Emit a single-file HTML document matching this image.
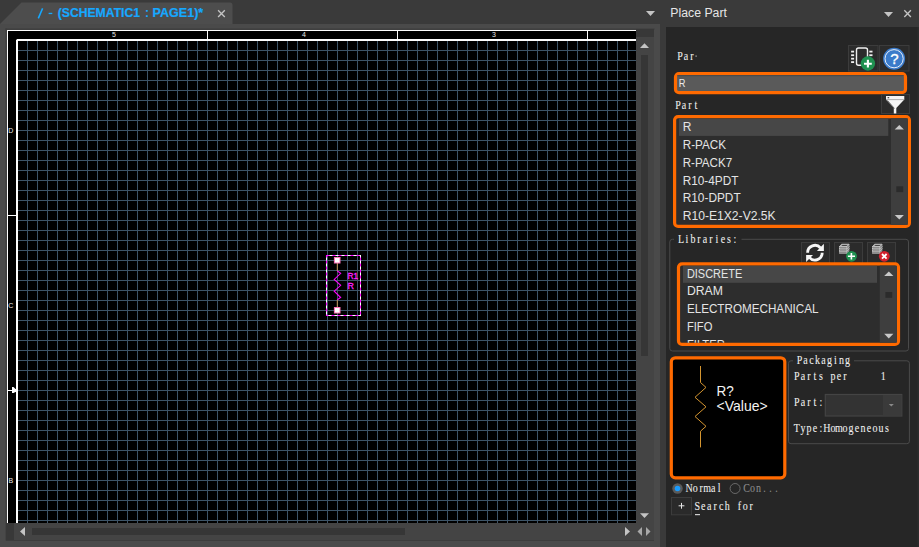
<!DOCTYPE html>
<html><head><meta charset="utf-8">
<style>
html,body{margin:0;padding:0;width:919px;height:547px;overflow:hidden;background:#3a3a3a;}
svg{display:block;position:absolute;left:0;top:0;}
</style></head>
<body>
<svg width="919" height="547" viewBox="0 0 919 547">
<defs>
  <pattern id="grid" x="17" y="40" width="10" height="10" patternUnits="userSpaceOnUse">
    <rect x="0" y="0" width="10" height="1" fill="#3d5467"/>
    <rect x="0" y="0" width="1" height="10" fill="#3d5467"/>
  </pattern>
  <clipPath id="cv"><rect x="7" y="30" width="629" height="493"/></clipPath>
  <clipPath id="libclip"><rect x="680.1" y="265.4" width="216.8" height="77.4"/></clipPath>
</defs>
<rect x="0" y="0" width="666" height="547" fill="#3a3a3a"/>
<path d="M0,24 L21.5,2.5 L230,2.5 Q232.5,2.5 232.5,5 L232.5,24 Z" fill="#4d4d4d"/>
<rect x="0" y="24" width="660" height="523" fill="#4a4a4a"/>
<path d="M38.3,18.4 L42.6,8.4" stroke="#16a8ff" stroke-width="1.5"/>
<rect x="48.6" y="12.8" width="3.7" height="1.3" fill="#16a8ff"/>
<text font-family="Liberation Sans" font-size="12" fill="#16a8ff" x="57.7" y="16.8" textLength="82.4" lengthAdjust="spacingAndGlyphs" font-weight="bold" stroke="#16a8ff" stroke-width="0.2">(SCHEMATIC1</text>
<text font-family="Liberation Sans" font-size="12" fill="#16a8ff" x="145.0" y="16.8" font-weight="bold" >:</text>
<text font-family="Liberation Sans" font-size="12" fill="#16a8ff" x="152.6" y="16.8" textLength="50.6" lengthAdjust="spacingAndGlyphs" font-weight="bold" stroke="#16a8ff" stroke-width="0.2">PAGE1)*</text>
<path d="M218.1,10.3 L224.8,17 M224.8,10.3 L218.1,17" stroke="#c4c4c4" stroke-width="1.35"/>
<path d="M646,11 L655,11 L650.5,16 Z" fill="#c4c4c4"/>
<g clip-path="url(#cv)">
<rect x="7" y="30" width="629" height="493" fill="#000"/>
<rect x="17" y="40" width="620" height="484" fill="url(#grid)"/>
<rect x="7" y="30" width="640" height="1" fill="#fff"/>
<rect x="7" y="30" width="1" height="500" fill="#fff"/>
<rect x="16.5" y="39" width="630" height="2" fill="#fff"/>
<rect x="16" y="39.5" width="2" height="490" fill="#fff"/>
<path d="M16,39 L17,39 L16,40 Z" fill="#000"/>
<rect x="207" y="30" width="1" height="10" fill="#fff"/>
<rect x="397" y="30" width="1" height="10" fill="#fff"/>
<rect x="587" y="30" width="1" height="10" fill="#fff"/>
<rect x="7" y="215" width="10" height="1" fill="#fff"/>
<rect x="7" y="390" width="10" height="1" fill="#fff"/>
<path d="M12,387 L13.5,387 L15.5,389 L17,389 L17,392 L15.5,392 L13.5,393 L12,393 Z" fill="#fff"/>
<g font-family="Liberation Sans" font-size="7" fill="#e8e8e8">
<text x="112" y="37">5</text><text x="302" y="37">4</text><text x="492" y="37">3</text>
<text x="8.2" y="133">D</text><text x="8.2" y="308">C</text><text x="8.6" y="483">B</text>
</g>
<rect x="326.5" y="255.5" width="34" height="60" fill="none" stroke="#fff" stroke-width="1"/>
<rect x="326.5" y="255.5" width="34" height="60" fill="none" stroke="#ff00ff" stroke-width="1.1" stroke-dasharray="3 3"/>
<path d="M337.3,263 L337.3,271 M337.3,299.8 L337.3,307" stroke="#c09050" stroke-width="1"/>
<path d="M337.3,271 L340.7,273.4 L334.2,279.4 L340.7,285.3 L334.2,291.2 L340.7,297.5 L337.3,299.8" fill="none" stroke="#ff00ff" stroke-width="1.05"/>
<rect x="334.4" y="257.5" width="5.6" height="5.5" fill="#fff" stroke="#ff70b8" stroke-width="1"/>
<rect x="334.4" y="307.5" width="5.6" height="5.5" fill="#fff" stroke="#ff70b8" stroke-width="1"/>
<text font-family="Liberation Sans" font-size="9.6" fill="#ff20ff" x="347.4" y="278.9" textLength="10.6" lengthAdjust="spacingAndGlyphs" stroke="#ff20ff" stroke-width="0.35">R1</text>
<text font-family="Liberation Sans" font-size="9.6" fill="#ff20ff" x="347.4" y="288.6" textLength="6.4" lengthAdjust="spacingAndGlyphs" stroke="#ff20ff" stroke-width="0.35">R</text>
</g>
<rect x="5.5" y="28.5" width="649" height="1.2" fill="#3d3d3d"/>
<rect x="5.5" y="28.5" width="1.2" height="512" fill="#3d3d3d"/>
<rect x="636" y="30" width="18" height="493" fill="#444444"/>
<rect x="636" y="29" width="18" height="8" fill="#383838"/>
<path d="M640,48 L649,48 L644.5,43.2 Z" fill="#c4c4c4"/>
<rect x="641" y="55" width="7" height="301" fill="#363636"/>
<path d="M640,513.2 L649,513.2 L644.5,518 Z" fill="#c4c4c4"/>
<rect x="6" y="523" width="648" height="17" fill="#444444"/>
<rect x="6" y="523" width="8" height="17" fill="#383838"/>
<rect x="6" y="540" width="648" height="1" fill="#3c3c3c"/>
<path d="M25,527 L25,536 L20,531.5 Z" fill="#c4c4c4"/>
<rect x="32" y="528" width="373" height="7" fill="#363636"/>
<path d="M625,527 L625,536 L630,531.5 Z" fill="#c4c4c4"/>
<path d="M642,527 L642,536 L637.5,531.5 Z" fill="#a8a8a8"/>
<path d="M646,527 L646,536 L650.5,531.5 Z" fill="#a8a8a8"/>
<rect x="666" y="0" width="253" height="27" fill="#3a3a3a"/>
<text font-family="Liberation Sans" font-size="12.5" fill="#e6e6e6" x="670.3" y="16.9" textLength="56.6" lengthAdjust="spacingAndGlyphs" >Place Part</text>
<path d="M884,12 L893,12 L888.5,17 Z" fill="#c4c4c4"/>
<path d="M904.3,10.3 L910.9,16.9 M910.9,10.3 L904.3,16.9" stroke="#c4c4c4" stroke-width="1.35"/>
<rect x="666" y="27" width="253" height="520" fill="#262626"/>
<rect x="917.3" y="27" width="1.7" height="520" fill="#2c2c2c"/>
<text transform="scale(0.8,1)" font-family="Liberation Serif" font-size="12.5" fill="#f0f0f0" stroke="#f0f0f0" stroke-width="0.08" text-anchor="middle" x="850.00,857.50,865.00" y="60" >Par</text>
<rect x="695.5" y="55.5" width="1.2" height="1.2" fill="#bbb"/>
<rect x="848.5" y="45.5" width="29.5" height="25.5" fill="#2b2b2b" stroke="#3c3c3c" stroke-width="1"/>
<rect x="879.5" y="45.5" width="29.5" height="25.5" fill="#2b2b2b" stroke="#3c3c3c" stroke-width="1"/>
<rect x="856.5" y="48" width="11" height="17.3" rx="2" fill="none" stroke="#f0f0f0" stroke-width="1.4"/>
<g fill="#f0f0f0"><rect x="851.1" y="50.7" width="3" height="1.8"/><rect x="851.1" y="54.3" width="3" height="1.8"/><rect x="851.1" y="57.8" width="3" height="1.8"/><rect x="851.1" y="61.2" width="3" height="1.8"/><rect x="869.3" y="50.7" width="3.2" height="1.8"/><rect x="869.3" y="54.3" width="3.2" height="1.8"/></g>
<circle cx="867.9" cy="63.5" r="7.2" fill="#1f9150"/>
<path d="M864,63.7 L871.8,63.7 M867.9,59.8 L867.9,67.6" stroke="#fff" stroke-width="2.1"/>
<circle cx="894.1" cy="58.7" r="11" fill="#3b7bca"/>
<circle cx="894.1" cy="58.7" r="9.1" fill="none" stroke="#e8eef8" stroke-width="1"/>
<text x="894.3" y="64.3" text-anchor="middle" font-family="Liberation Sans" font-size="15" fill="#fff" stroke="#fff" stroke-width="0.35">?</text>
<rect x="675.5" y="73.5" width="230" height="19.2" rx="3.5" fill="#5a5a5a" stroke="#ff6a00" stroke-width="3.2"/>
<rect x="677.2" y="75.2" width="226.6" height="1" fill="#474747"/>
<text font-family="Liberation Sans" font-size="11.5" fill="#ececec" x="678.8" y="87" textLength="6.7" lengthAdjust="spacingAndGlyphs" >R</text>
<text transform="scale(0.8,1)" font-family="Liberation Serif" font-size="12.5" fill="#f0f0f0" stroke="#f0f0f0" stroke-width="0.08" text-anchor="middle" x="847.50,855.00,862.50,870.00" y="109" >Part</text>
<rect x="881.5" y="94.5" width="28" height="19" fill="#2b2b2b" stroke="#3c3c3c" stroke-width="1"/>
<path d="M886,96 L904.3,96 L904.3,99.6 L896.3,108 L896.3,113.5 L893.8,113.5 L893.8,108 L886,99.6 Z" fill="#f4f4f4"/>
<rect x="886" y="99.3" width="18.3" height="0.8" fill="#9a9a9a"/>
<path d="M887.5,100.5 L894.5,108.5" stroke="#3a3a3a" stroke-width="0.7"/>
<rect x="887.6" y="97" width="1.6" height="1.3" fill="#555"/>
<rect x="674.6" y="116.6" width="234.8" height="109.8" rx="3.5" fill="#2d2d2d" stroke="#ff6a00" stroke-width="3.2"/>
<rect x="679" y="118.7" width="209.3" height="17.2" fill="#474747"/>
<rect x="891" y="118.2" width="16.8" height="106.6" fill="#3e3e3e"/>
<path d="M894.7,129.5 L903.9,129.5 L899.3,124.9 Z" fill="#c8c8c8"/>
<rect x="896.3" y="186.3" width="6.9" height="5.8" fill="#2b2b2b"/>
<path d="M894.7,214.9 L903.9,214.9 L899.3,219.5 Z" fill="#c8c8c8"/>
<text font-family="Liberation Sans" font-size="12" fill="#e4e4e4" x="682.7" y="130.8" >R</text>
<text font-family="Liberation Sans" font-size="12" fill="#e4e4e4" x="682.7" y="148.72" textLength="43.3" lengthAdjust="spacingAndGlyphs" >R-PACK</text>
<text font-family="Liberation Sans" font-size="12" fill="#e4e4e4" x="682.7" y="166.64" textLength="49.5" lengthAdjust="spacingAndGlyphs" >R-PACK7</text>
<text font-family="Liberation Sans" font-size="12" fill="#e4e4e4" x="682.7" y="184.56" textLength="55.7" lengthAdjust="spacingAndGlyphs" >R10-4PDT</text>
<text font-family="Liberation Sans" font-size="12" fill="#e4e4e4" x="682.7" y="202.48" textLength="58" lengthAdjust="spacingAndGlyphs" >R10-DPDT</text>
<text font-family="Liberation Sans" font-size="12" fill="#e4e4e4" x="682.7" y="220.4" textLength="93" lengthAdjust="spacingAndGlyphs" >R10-E1X2-V2.5K</text>
<path d="M674,239.3 L672.5,239.3 Q669.8,239.3 669.8,242 L669.8,348.5 Q669.8,351 672.5,351 L906,351 Q908.5,351 908.5,348.5 L908.5,242 Q908.5,239.3 906,239.3 L741.5,239.3" fill="none" stroke="#4a4a4a" stroke-width="1"/>
<text transform="scale(0.8,1)" font-family="Liberation Serif" font-size="12.5" fill="#f0f0f0" stroke="#f0f0f0" stroke-width="0.08" text-anchor="middle" x="851.25,858.75,866.25,873.75,881.25,888.75,896.25,903.75,911.25,918.75" y="242.6" >Libraries:</text>
<rect x="801.5" y="242.5" width="28" height="22" fill="#2b2b2b" stroke="#3c3c3c" stroke-width="1"/>
<rect x="834.5" y="242.5" width="28" height="22" fill="#2b2b2b" stroke="#3c3c3c" stroke-width="1"/>
<rect x="867.5" y="242.5" width="28" height="22" fill="#2b2b2b" stroke="#3c3c3c" stroke-width="1"/>
<g fill="none" stroke="#f6f6f6" stroke-width="2.8"><path d="M807.6,252.7 A7.3,7.3 0 0 1 820.5,248"/><path d="M822.2,252.7 A7.3,7.3 0 0 1 809.3,257.4"/></g>
<path d="M823.9,243.7 L823.9,251 L816.9,251 Z" fill="#f6f6f6"/>
<path d="M806.1,254.9 L806.1,262 L813,254.9 Z" fill="#f6f6f6"/>
<g transform="translate(0,0)"><path d="M841.6,248.6 L849,248.6 L847,250.9 L839.6,250.9 Z" fill="#a8a8a8" stroke="#dcdcdc" stroke-width="0.7"/><rect x="839.6" y="250.9" width="7.4" height="2.4" fill="#8c8c8c" stroke="#cfcfcf" stroke-width="0.5"/><path d="M847,250.9 L849,248.6 L849,251.0 L847,253.3 Z" fill="#7a7a7a" stroke="#cfcfcf" stroke-width="0.5"/><path d="M841.6,246.4 L849,246.4 L847,248.7 L839.6,248.7 Z" fill="#a8a8a8" stroke="#dcdcdc" stroke-width="0.7"/><rect x="839.6" y="248.7" width="7.4" height="2.4" fill="#8c8c8c" stroke="#cfcfcf" stroke-width="0.5"/><path d="M847,248.7 L849,246.4 L849,248.8 L847,251.1 Z" fill="#7a7a7a" stroke="#cfcfcf" stroke-width="0.5"/><path d="M841.6,244.2 L849,244.2 L847,246.5 L839.6,246.5 Z" fill="#a8a8a8" stroke="#dcdcdc" stroke-width="0.7"/><rect x="839.6" y="246.5" width="7.4" height="2.4" fill="#8c8c8c" stroke="#cfcfcf" stroke-width="0.5"/><path d="M847,246.5 L849,244.2 L849,246.6 L847,248.9 Z" fill="#7a7a7a" stroke="#cfcfcf" stroke-width="0.5"/><path d="M842.5,244.9 L847.5,244.9 L846.5,245.9 L841.5,245.9 Z" fill="#444"/></g>
<g transform="translate(33,0)"><path d="M841.6,248.6 L849,248.6 L847,250.9 L839.6,250.9 Z" fill="#a8a8a8" stroke="#dcdcdc" stroke-width="0.7"/><rect x="839.6" y="250.9" width="7.4" height="2.4" fill="#8c8c8c" stroke="#cfcfcf" stroke-width="0.5"/><path d="M847,250.9 L849,248.6 L849,251.0 L847,253.3 Z" fill="#7a7a7a" stroke="#cfcfcf" stroke-width="0.5"/><path d="M841.6,246.4 L849,246.4 L847,248.7 L839.6,248.7 Z" fill="#a8a8a8" stroke="#dcdcdc" stroke-width="0.7"/><rect x="839.6" y="248.7" width="7.4" height="2.4" fill="#8c8c8c" stroke="#cfcfcf" stroke-width="0.5"/><path d="M847,248.7 L849,246.4 L849,248.8 L847,251.1 Z" fill="#7a7a7a" stroke="#cfcfcf" stroke-width="0.5"/><path d="M841.6,244.2 L849,244.2 L847,246.5 L839.6,246.5 Z" fill="#a8a8a8" stroke="#dcdcdc" stroke-width="0.7"/><rect x="839.6" y="246.5" width="7.4" height="2.4" fill="#8c8c8c" stroke="#cfcfcf" stroke-width="0.5"/><path d="M847,246.5 L849,244.2 L849,246.6 L847,248.9 Z" fill="#7a7a7a" stroke="#cfcfcf" stroke-width="0.5"/><path d="M842.5,244.9 L847.5,244.9 L846.5,245.9 L841.5,245.9 Z" fill="#444"/></g>
<circle cx="851.5" cy="256.3" r="5.4" fill="#1f9150"/>
<path d="M847.9,256.3 L855,256.3 M851.4,253 L851.4,259.5" stroke="#fff" stroke-width="1.6"/>
<circle cx="884.3" cy="256.3" r="5.4" fill="#d3202c"/>
<path d="M882,254 L886.6,258.6 M886.6,254 L882,258.6" stroke="#fff" stroke-width="1.8"/>
<rect x="678.5" y="263.8" width="220" height="80.6" rx="3.5" fill="#2d2d2d" stroke="#ff6a00" stroke-width="3.2"/>
<g clip-path="url(#libclip)">
<rect x="683" y="265.8" width="194" height="17" fill="#474747"/>
<rect x="879.8" y="265.4" width="17.2" height="77.4" fill="#3e3e3e"/>
<path d="M884.2,276 L893.4,276 L888.8,271.4 Z" fill="#c8c8c8"/>
<rect x="885.4" y="292" width="6.8" height="5.8" fill="#2b2b2b"/>
<path d="M884.2,333.8 L893.4,333.8 L888.8,338.4 Z" fill="#c8c8c8"/>
<text font-family="Liberation Sans" font-size="12" fill="#e4e4e4" x="686.9" y="277.5" textLength="55.4" lengthAdjust="spacingAndGlyphs" >DISCRETE</text>
<text font-family="Liberation Sans" font-size="12" fill="#e4e4e4" x="686.9" y="295.45" textLength="36" lengthAdjust="spacingAndGlyphs" >DRAM</text>
<text font-family="Liberation Sans" font-size="12" fill="#e4e4e4" x="686.9" y="313.4" textLength="131.6" lengthAdjust="spacingAndGlyphs" >ELECTROMECHANICAL</text>
<text font-family="Liberation Sans" font-size="12" fill="#e4e4e4" x="686.9" y="331.35" textLength="25.5" lengthAdjust="spacingAndGlyphs" >FIFO</text>
<text font-family="Liberation Sans" font-size="12" fill="#e4e4e4" x="686.9" y="349.3" textLength="38" lengthAdjust="spacingAndGlyphs" >FILTER</text>
</g>
<rect x="671.3" y="357.8" width="113.5" height="120.1" rx="4" fill="#000" stroke="#ff6a00" stroke-width="3.2"/>
<path d="M700.5,366 L700.5,382.5 L706,387.4 L695,397.3 L706,406.8 L695,416.5 L706,426.3 L700.5,431.2 L700.5,447.4" fill="none" stroke="#d49530" stroke-width="1"/>
<text font-family="Liberation Sans" font-size="14.8" fill="#f4f4f4" x="716.6" y="396" textLength="17.3" lengthAdjust="spacingAndGlyphs" >R?</text>
<text font-family="Liberation Sans" font-size="14.8" fill="#f4f4f4" x="716.6" y="411.4" textLength="51.1" lengthAdjust="spacingAndGlyphs" >&lt;Value&gt;</text>
<path d="M793,360.8 L791,360.8 Q788.5,360.8 788.5,363.3 L788.5,441.2 Q788.5,443.7 791,443.7 L906.9,443.7 Q909.4,443.7 909.4,441.2 L909.4,363.3 Q909.4,360.8 906.9,360.8 L854,360.8" fill="none" stroke="#4a4a4a" stroke-width="1"/>
<text transform="scale(0.8,1)" font-family="Liberation Serif" font-size="12.5" fill="#f0f0f0" stroke="#f0f0f0" stroke-width="0.08" text-anchor="middle" x="999.38,1006.88,1014.38,1021.88,1029.38,1036.88,1044.38,1051.88,1059.38" y="364.3" >Packaging</text>
<text transform="scale(0.8,1)" font-family="Liberation Serif" font-size="12.5" fill="#f0f0f0" stroke="#f0f0f0" stroke-width="0.08" text-anchor="middle" x="996.12,1003.62,1011.12,1018.62,1026.12,1033.62,1041.12,1048.62,1056.12" y="380.3" >Parts per</text>
<text transform="scale(0.8,1)" font-family="Liberation Serif" font-size="12.5" fill="#f0f0f0" stroke="#f0f0f0" stroke-width="0.08" text-anchor="middle" x="1104.12" y="380.3" >1</text>
<text transform="scale(0.8,1)" font-family="Liberation Serif" font-size="12.5" fill="#f0f0f0" stroke="#f0f0f0" stroke-width="0.08" text-anchor="middle" x="996.12,1003.62,1011.12,1018.62,1026.12" y="406.1" >Part:</text>
<text transform="scale(0.8,1)" font-family="Liberation Serif" font-size="12.5" fill="#f0f0f0" stroke="#f0f0f0" stroke-width="0.08" text-anchor="middle" x="996.12,1003.62,1011.12,1018.62,1026.12,1033.62,1041.12,1048.62,1056.12,1063.62,1071.12,1078.62,1086.12,1093.62,1101.12,1108.62" y="431.7" >Type:Homogeneous</text>
<rect x="825.3" y="394.5" width="76.5" height="21.5" fill="#333" stroke="#444" stroke-width="1.2"/>
<rect x="882.8" y="395" width="18.5" height="20.5" fill="#3a3a3a"/>
<path d="M888.8,404 L893.8,404 L891.3,406.5 Z" fill="#8a8a8a"/>
<circle cx="677.5" cy="488.5" r="5.2" fill="#5a5a5a"/>
<circle cx="677.5" cy="488.5" r="2.8" fill="#1a9cff"/>
<text transform="scale(0.8,1)" font-family="Liberation Serif" font-size="12.5" fill="#f0f0f0" stroke="#f0f0f0" stroke-width="0.08" text-anchor="middle" x="861.50,869.00,876.50,884.00,891.50,899.00" y="491.9" >Normal</text>
<circle cx="735.1" cy="488.5" r="5" fill="none" stroke="#6a6a6a" stroke-width="1"/>
<text transform="scale(0.8,1)" font-family="Liberation Serif" font-size="12.5" fill="#8c8c8c" stroke="#8c8c8c" stroke-width="0.08" text-anchor="middle" x="933.25,940.75,948.25,955.75,963.25,970.75" y="491.9" >Con...</text>
<rect x="671.5" y="497.5" width="20" height="17.3" fill="#2a2a2a" stroke="#3c3c3c" stroke-width="1"/>
<path d="M678.6,505.8 L684.4,505.8 M681.5,502.9 L681.5,508.7" stroke="#e8e8e8" stroke-width="1"/>
<text transform="scale(0.8,1)" font-family="Liberation Serif" font-size="12.5" fill="#f0f0f0" stroke="#f0f0f0" stroke-width="0.08" text-anchor="middle" x="871.62,879.12,886.62,894.12,901.62,909.12,916.62,924.12,931.62,939.12" y="509.8" >Search for</text>
<rect x="695" y="514" width="5" height="1.2" fill="#cfcfcf"/>
</svg>
</body></html>
